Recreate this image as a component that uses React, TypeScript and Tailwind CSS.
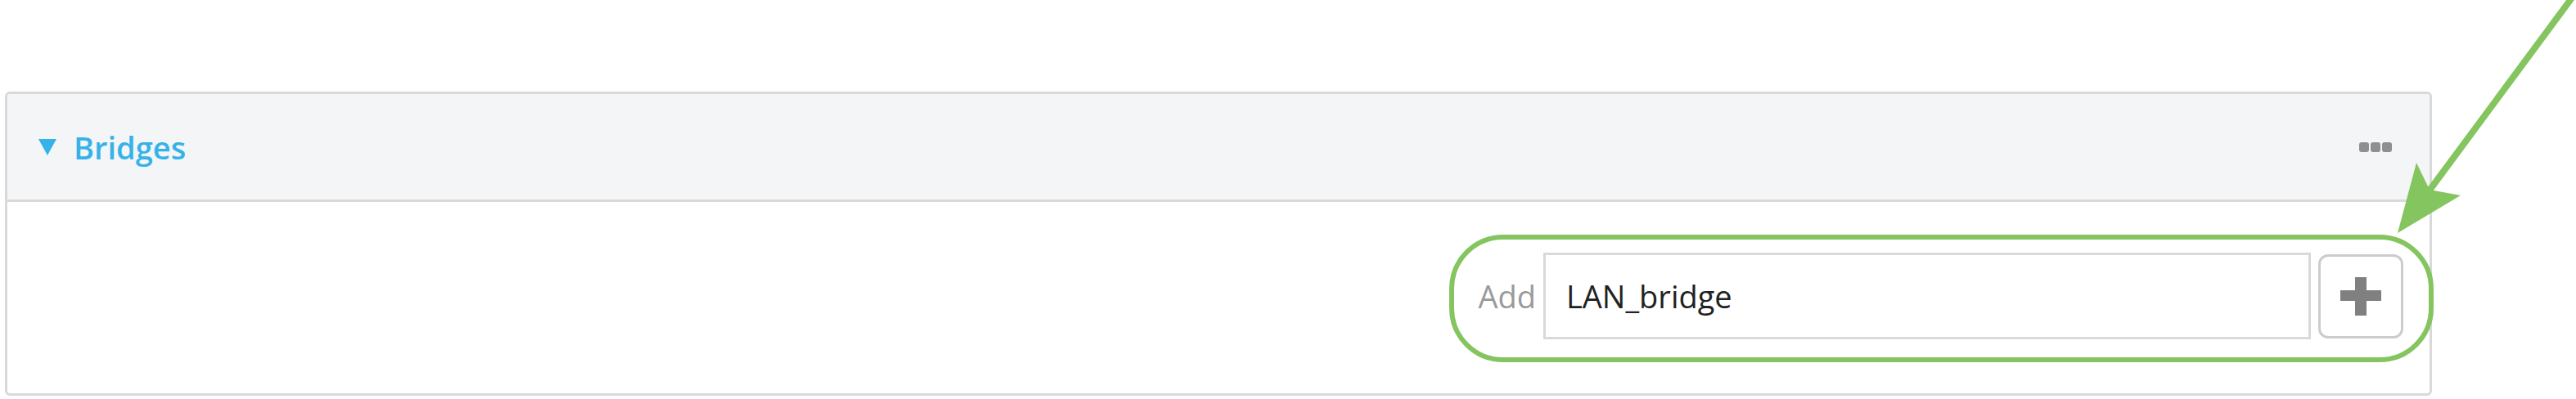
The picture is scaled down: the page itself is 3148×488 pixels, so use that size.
import React from "react";

function Caret() {
  return (
    <svg width="22" height="20" viewBox="0 0 22 20" className="shrink-0">
      <polygon points="0,0 22,0 11,20" fill="#35b3e9" />
    </svg>
  );
}

function Dots() {
  return (
    <div className="flex items-center gap-[2px]">
      <span className="w-[12px] h-[12px] rounded-[3px] bg-[#8f8f8f]" />
      <span className="w-[12px] h-[12px] rounded-[3px] bg-[#8f8f8f]" />
      <span className="w-[12px] h-[12px] rounded-[3px] bg-[#8f8f8f]" />
    </div>
  );
}

function PlusIcon() {
  return (
    <svg width="50" height="47" viewBox="0 0 50 47">
      <rect x="0" y="16" width="50" height="13" fill="#808080" />
      <rect x="18" y="0" width="14" height="47" fill="#808080" />
    </svg>
  );
}

export default function App() {
  return (
    <div className="relative w-[3148px] h-[488px] bg-white overflow-hidden font-['Open_Sans',sans-serif]">
      <div className="pt-[112px] pl-[6px]">
        <div className="w-[2966px] border-[3px] border-[#d9d9d9] rounded-[6px] overflow-hidden">
          {/* Header */}
          <div className="h-[132px] bg-[#f4f5f7] border-b-[3px] border-[#d9d9d9] flex items-center pl-[38px] pr-[46px]">
            <Caret />
            <span className="ml-[21px] text-[38px] font-semibold text-[#35b3e9] leading-none">Bridges</span>
            <div className="ml-auto">
              <Dots />
            </div>
          </div>

          {/* Body */}
          <div className="h-[234px] flex items-start justify-end pt-[62px] pr-[32px]">
            <div className="flex items-center">
              <span className="mr-[9px] text-[38px] text-[#9a9a9a] leading-none">Add</span>
              <div className="w-[938px] h-[106px] border-[3px] border-[#d9d9d9] flex items-center pl-[25px] text-[38px] text-[#222222]">
                LAN_bridge
              </div>
              <button className="ml-[9px] w-[104px] h-[103px] border-[3px] border-[#cccccc] rounded-[12px] bg-white flex items-center justify-center">
                <PlusIcon />
              </button>
            </div>
          </div>
        </div>
      </div>

      {/* Highlight annotation */}
      <div className="absolute left-[1771px] top-[287px] w-[1203px] h-[156px] border-[6px] border-[#84c55f] rounded-[66px] pointer-events-none" />

      {/* Arrow annotation */}
      <svg className="absolute left-0 top-0 pointer-events-none" width="3148" height="488" viewBox="0 0 3148 488">
        <line x1="3144" y1="-4" x2="2968" y2="234" stroke="#84c55f" strokeWidth="8" />
        <polygon points="2930,285 2953,199 2969,232 3007,239" fill="#84c55f" />
      </svg>
    </div>
  );
}
